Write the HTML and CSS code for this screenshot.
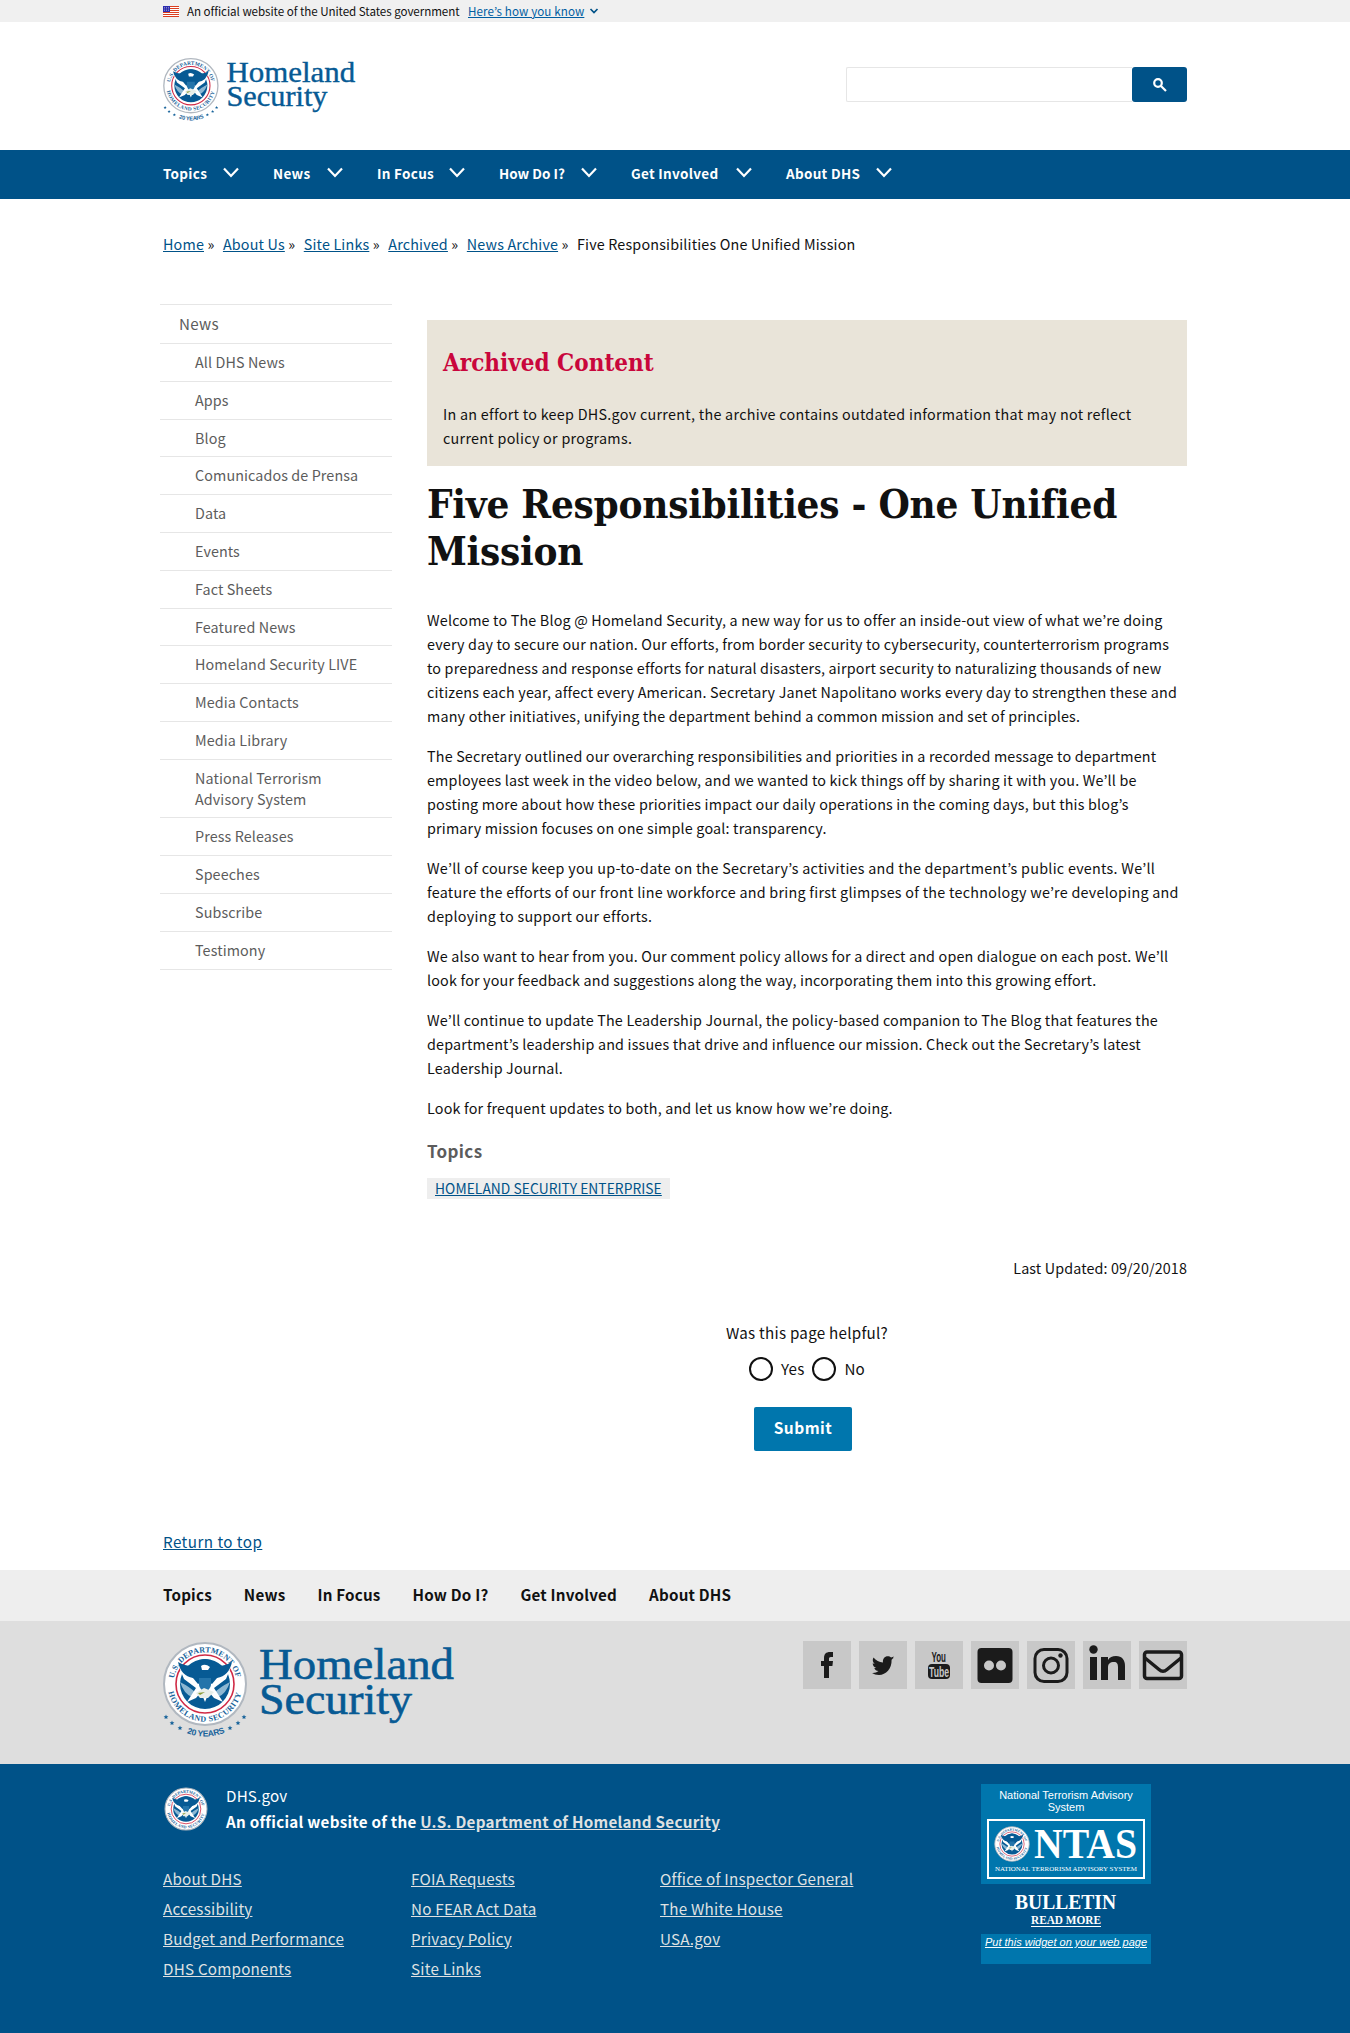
FILE: index.html
```html
<!DOCTYPE html>
<html lang="en">
<head>
<meta charset="utf-8">
<title>Five Responsibilities One Unified Mission | Homeland Security</title>
<link rel="stylesheet" href="styles.css">
</head>
<body>
<svg class="defs" width="0" height="0" aria-hidden="true">
  <defs>
    <path id="arc-top" d="M-31.200-4.500A31.500 31.500 0 0 1 31.200-4.500"/>
    <path id="arc-bottom" d="M-36.700 7A37.300 37.300 0 0 0 36.700 7"/>
    <path id="arc-years" d="M-38 36A52 52 0 0 0 38 36"/>
    <path id="star" d="M0-2.400L.7-.8 2.400-.7 1.100.4 1.500 2.100 0 1.200-1.500 2.100-1.100.4-2.400-.7-.7-.8z"/>
    <g id="seal">
      <circle r="41" fill="#fff" stroke="#b1b8c0" stroke-width="2"/>
      <g class="seal-text">
        <text><textPath href="#arc-top" textLength="87" startOffset="1">U.S. DEPARTMENT OF</textPath></text>
        <text><textPath href="#arc-bottom" textLength="100" startOffset="1">HOMELAND SECURITY</textPath></text>
      </g>
      <circle r="29" fill="#fff" stroke="#d02a45" stroke-width="1.6"/>
      <circle r="25" fill="#075a94"/>
      <path d="M-25-2Q-15 3-9 9L-13 13Q-21 10-25-2M25-2Q15 3 9 9L13 13Q21 10 25-2" fill="#8db7d2"/>
      <path d="M-28-22L-21-5-9 4-18 18-9 14-4 8 0 18 4 8 9 14 18 18 9 4 21-5 28-22 13-7 7-3 0-6-7-3-13-7z" fill="#fff"/>
      <path d="M-27-22Q-19-17-8-18Q-7-25 0-25Q7-25 8-18Q19-17 27-22Q24-8 12-6L7 0Q0-5-7 0L-12-6Q-24-8-27-22" fill="#075a94"/>
      <path d="M-4-18Q0-21 5-17L3-14-3-14z" fill="#fff"/>
      <path d="M-6-6H6V1Q5 6 0 8Q-5 6-6 1z" fill="#2474aa"/>
      <path d="M-9 9L-1 4 9 8 3 14-5 14z" fill="#e8eee9"/>
      <path d="M-7 9l7-1-5 3z" fill="#8b9b36"/>
    </g>
    <g id="brand">
      <use href="#seal" transform="translate(42 42)"/>
      <g fill="#16629a">
        <use href="#star" x="3" y="75"/><use href="#star" x="9" y="81"/><use href="#star" x="17" y="86"/>
        <use href="#star" x="67" y="86"/><use href="#star" x="75" y="81"/><use href="#star" x="81" y="75"/>
      </g>
      <g transform="translate(42 42)" class="years"><text><textPath href="#arc-years" textLength="39" startOffset="24">20 YEARS</textPath></text></g>
      <g class="wordmark">
        <text x="96" y="36.500" textLength="195" lengthAdjust="spacingAndGlyphs">Homeland</text>
        <text x="96" y="72" textLength="153" lengthAdjust="spacingAndGlyphs">Security</text>
      </g>
    </g>
    <path id="chev" d="M1 1.500L8 9l7-7.500" fill="none" stroke="#fff" stroke-width="2.200"/>
  </defs>
</svg>

<div class="banner"><div class="wrap">
  <svg width="16" height="11" viewBox="0 0 16 11"><path fill="#fff" d="M0 0h16v11H0z"/><path d="M0 .5h16M0 2.500h16M0 4.500h16M0 6.500h16M0 8.500h16M0 10.500h16" stroke="#db3e1f"/><path fill="#2c2cb0" d="M0 0h7v6H0z"/><path d="M1 1.500h5.500M1 3h5.500M1 4.500h5.500" stroke="#aac" stroke-width=".7" stroke-dasharray="1 1"/></svg>
  <span class="banner-text">An official website of the United States government</span>
  <a class="banner-link">Here’s how you know</a>
  <svg width="10" height="6" viewBox="0 0 10 6"><path d="M1.500 1L5 4.500 8.500 1" fill="none" stroke="#005288" stroke-width="1.700"/></svg>
</div></div>

<header class="header wrap">
  <svg class="logo" width="193" height="66" viewBox="0 0 292 100"><use href="#brand"/></svg>
  <form class="search">
    <span class="search-field"></span>
    <span class="search-button"><svg width="14" height="14" viewBox="0 0 14 14"><circle cx="5" cy="5" r="3.800"/><path d="M8 8l5 5"/></svg></span>
  </form>
</header>

<nav class="nav"><div class="wrap">
  <a class="n1">Topics<svg width="16" height="11"><use href="#chev"/></svg></a>
  <a class="n2">News<svg width="16" height="11"><use href="#chev"/></svg></a>
  <a class="n3">In Focus<svg width="16" height="11"><use href="#chev"/></svg></a>
  <a class="n4">How Do I?<svg width="16" height="11"><use href="#chev"/></svg></a>
  <a class="n5">Get Involved<svg width="16" height="11"><use href="#chev"/></svg></a>
  <a class="n6">About DHS<svg width="16" height="11"><use href="#chev"/></svg></a>
</div></nav>

<div class="crumbs wrap">
  <span><a>Home</a> »</span><span><a>About Us</a> »</span><span><a>Site Links</a> »</span><span><a>Archived</a> »</span><span><a>News Archive</a> »</span><span>Five Responsibilities One Unified Mission</span>
</div>

<div class="columns wrap">
  <ul class="side">
    <li class="side-top">News</li>
    <li>All DHS News</li><li>Apps</li><li>Blog</li><li>Comunicados de Prensa</li><li>Data</li><li>Events</li><li>Fact Sheets</li><li>Featured News</li><li>Homeland Security LIVE</li><li>Media Contacts</li><li>Media Library</li><li>National Terrorism<br>Advisory System</li><li>Press Releases</li><li>Speeches</li><li>Subscribe</li><li>Testimony</li>
  </ul>
  <main class="main">
    <section class="archived">
      <h2>Archived Content</h2>
      <p>In an effort to keep DHS.gov current, the archive contains outdated information that may not reflect<br>current policy or programs.</p>
    </section>
    <h1>Five Responsibilities - One Unified<br>Mission</h1>
    <div class="copy">
      <p>Welcome to The Blog @ Homeland Security, a new way for us to offer an inside-out view of what we’re doing<br>every day to secure our nation. Our efforts, from border security to cybersecurity, counterterrorism programs<br>to preparedness and response efforts for natural disasters, airport security to naturalizing thousands of new<br>citizens each year, affect every American. Secretary Janet Napolitano works every day to strengthen these and<br>many other initiatives, unifying the department behind a common mission and set of principles.</p>
      <p>The Secretary outlined our overarching responsibilities and priorities in a recorded message to department<br>employees last week in the video below, and we wanted to kick things off by sharing it with you. We’ll be<br>posting more about how these priorities impact our daily operations in the coming days, but this blog’s<br>primary mission focuses on one simple goal: transparency.</p>
      <p class="loose">We’ll of course keep you up-to-date on the Secretary’s activities and the department’s public events. We’ll<br>feature the efforts of our front line workforce and bring first glimpses of the technology we’re developing and<br>deploying to support our efforts.</p>
      <p>We also want to hear from you. Our comment policy allows for a direct and open dialogue on each post. We’ll<br>look for your feedback and suggestions along the way, incorporating them into this growing effort.</p>
      <p>We’ll continue to update The Leadership Journal, the policy-based companion to The Blog that features the<br>department’s leadership and issues that drive and influence our mission. Check out the Secretary’s latest<br>Leadership Journal.</p>
      <p>Look for frequent updates to both, and let us know how we’re doing.</p>
    </div>
    <h3>Topics</h3>
    <a class="tag">HOMELAND SECURITY ENTERPRISE</a>
    <p class="updated">Last Updated: 09/20/2018</p>
    <form class="helpful">
      <p>Was this page helpful?</p>
      <div class="choices"><i></i><span>Yes</span><i></i><span>No</span></div>
      <span class="submit">Submit</span>
    </form>
  </main>
</div>

<div class="return wrap"><a>Return to top</a></div>

<footer>
  <div class="foot-nav"><div class="wrap"><a>Topics</a><a>News</a><a>In Focus</a><a>How Do I?</a><a>Get Involved</a><a>About DHS</a></div></div>
  <div class="foot-brand"><div class="wrap">
    <svg class="foot-logo" width="292" height="100" viewBox="0 0 292 100"><use href="#brand"/></svg>
    <div class="social">
      <svg viewBox="0 0 48 48"><path d="M21 37V25h-3v-5h3v-3c0-4 2-6 6-6h3v5h-2c-2 0-2 1-2 2v2h4l-.6 5H26v12z"/></svg>
      <svg viewBox="0 0 48 48"><path d="M35 16.500l-2.400 2.300c.3 9-5.600 15.200-12.600 15.200-3 0-5-.8-7-2 2.800.2 4.800-.5 6.500-1.900-2.200-.2-3.500-1.300-4.200-3.100h2c-2.300-.8-3.600-2.500-3.600-4.700l2 .6c-2-1.600-2.500-4-1.200-6.300 2.500 3 5.600 4.700 9.500 4.800-.6-3.500 1.700-6.200 4.800-6.200 1.300 0 2.400.5 3.300 1.400l2.900-1.100-1.500 2z"/></svg>
      <svg viewBox="0 0 48 48"><rect x="13" y="23" width="22" height="15" rx="4"/><text class="yt" x="16.500" y="20.500" textLength="14.500" lengthAdjust="spacingAndGlyphs">You</text><text class="yt tube" x="14" y="35.500" textLength="20" lengthAdjust="spacingAndGlyphs">Tube</text></svg>
      <svg viewBox="0 0 48 48"><rect x="6.500" y="7" width="35" height="35" rx="4"/><circle cx="18" cy="24.500" r="5" fill="#c8c8c8"/><circle cx="30" cy="24.500" r="5" fill="#c8c8c8"/></svg>
      <svg viewBox="0 0 48 48"><g fill="none" stroke="#1b1b1b" stroke-width="3"><rect x="8" y="8.500" width="32" height="32" rx="9"/><circle cx="24" cy="24.500" r="7.500"/></g><circle cx="33.500" cy="14.500" r="2.200"/></svg>
      <svg viewBox="0 0 48 48"><circle cx="10.500" cy="8.500" r="4.200"/><path d="M7 16h7v23H7zM18 16h7v3c2-3 4-4 8-4 6 0 9 4 9 10v14h-7V26c0-3-1-5-4-5-4 0-6 2-6 5v13h-7z"/></svg>
      <svg viewBox="0 0 48 48"><g fill="none" stroke="#1b1b1b" stroke-width="3.500"><rect x="5.500" y="11" width="37" height="26.500" rx="2.500"/><path d="M6 17l14 11.500q4 3.500 8 0L42 17"/></g></svg>
    </div>
  </div></div>
  <div class="foot-id"><div class="wrap">
    <div class="foot-info">
      <div class="ident">
        <svg width="44" height="44" viewBox="-43 -43 86 86"><use href="#seal"/></svg>
        <div><p>DHS.gov</p><p class="ident-main">An official website of the <a>U.S. Department of Homeland Security</a></p></div>
      </div>
      <div class="links">
        <a>About DHS</a><a>FOIA Requests</a><a>Office of Inspector General</a>
        <a>Accessibility</a><a>No FEAR Act Data</a><a>The White House</a>
        <a>Budget and Performance</a><a>Privacy Policy</a><a>USA.gov</a>
        <a>DHS Components</a><a>Site Links</a>
      </div>
    </div>
    <aside class="ntas">
      <div class="ntas-top">National Terrorism Advisory<br>System
        <svg width="158" height="60" viewBox="0 0 158 60"><rect x="1" y="1" width="156" height="58" fill="none" stroke="#fff" stroke-width="2"/><use href="#seal" transform="translate(25 25) scale(.42)"/>
        <text class="big" x="47" y="39" textLength="103" lengthAdjust="spacingAndGlyphs">NTAS</text><text class="small" x="8" y="52" textLength="142" lengthAdjust="spacingAndGlyphs">NATIONAL TERRORISM ADVISORY SYSTEM</text></svg>
      </div>
      <div class="ntas-mid"><svg width="170" height="50" viewBox="0 0 170 50"><text class="bulletin" x="34" y="25" textLength="101" lengthAdjust="spacingAndGlyphs">BULLETIN</text><text class="more" x="50" y="40" textLength="70" lengthAdjust="spacingAndGlyphs">READ MORE</text><path d="M50 42.500h70" stroke="#fff"/></svg></div>
      <div class="ntas-foot"><a>Put this widget on your web page</a></div>
    </aside>
  </div></div>
</footer>
</body>
</html>
```
FILE: styles.css
```css
* { box-sizing: border-box; }
body { margin: 0; background: #fff; color: #111; font: 14.33px/24px "Noto Sans CJK KR", "Noto Sans", sans-serif; letter-spacing: .18px; }
p, h1, h2, h3, ul { margin: 0; padding: 0; }
svg { display: block; flex: none; letter-spacing: 0; }
.defs { position: absolute; }
a, p, span, li { white-space: nowrap; }
.wrap { width: 1024px; margin: 0 auto; display: flex; }

.seal-text { font: bold 8px "Liberation Serif", serif; fill: #16629a; }
.years { font: bold 8.5px "Liberation Sans", sans-serif; fill: #16629a; }
.wordmark { font: 45px "Liberation Serif", serif; fill: #075a94; stroke: #075a94; stroke-width: .6px; }

.banner { height: 22px; background: #f0f0f0; }
.banner .wrap { height: 22px; align-items: center; }
.banner-text { font-size: 11.6px; letter-spacing: -.05px; margin-left: 8px; width: 281px; flex: none; }
.banner-link { font-size: 11.6px; letter-spacing: .1px; color: #005ea2; text-decoration: underline; margin-right: 5px; }

.header { height: 128px; justify-content: space-between; }
.logo { margin-top: 36px; }
.search { display: flex; height: 35px; margin-top: 45px; }
.search-field { width: 286px; border: 1px solid #e6e6e6; border-radius: 2px 0 0 2px; border-right: 0; }
.search-button { width: 55px; border-radius: 3px; background: #005288; display: flex; align-items: center; justify-content: center; }
.search-button svg { fill: none; stroke: #fff; stroke-width: 2.2; }

.nav { height: 49px; background: #005288; }
.nav a { display: flex; align-items: center; justify-content: space-between; height: 45px; color: #fff; font-weight: 700; font-size: 13.5px; letter-spacing: .3px; }
.n1 { width: 76px; margin-right: 34px; }
.n2 { width: 70px; margin-right: 34px; }
.n3 { width: 88px; margin-right: 34px; }
.nav .n4 { width: 98px; margin-right: 34px; letter-spacing: 0; }
.n5 { width: 121px; margin-right: 34px; }
.n6 { width: 106px; }

.crumbs { height: 105px; padding-top: 33px; gap: 8.5px; letter-spacing: .17px; }
.crumbs a { color: #005288; text-decoration: underline; }

.columns { height: 1206px; }
.side { list-style: none; width: 232px; margin: 0 35px 0 -3px; color: #5c5c5c; line-height: 20.8px; letter-spacing: .1px; flex: none; }
.side li { border-top: 1px solid #e6e6e6; padding: 8px 0 8px 35px; }
.side .side-top { font-size: 15.2px; line-height: 20.1px; padding: 8px 0 10px 19px; letter-spacing: .3px; }
.side li:last-child { border-bottom: 1px solid #e6e6e6; }

.main { width: 760px; padding-top: 16px; }
.archived { height: 146px; background: #e9e4d9; padding: 26px 16px 0; letter-spacing: .28px; }
.archived h2 { font: bold 24px/34px "DejaVu Serif Condensed", "DejaVu Serif", serif; color: #c9063c; letter-spacing: 0; margin-bottom: 22px; white-space: nowrap; }
h1 { font: bold 40px/47px "DejaVu Serif Condensed", "DejaVu Serif", serif; color: #111; letter-spacing: -.25px; padding-top: 14px; margin-bottom: 34px; white-space: nowrap; }
.copy p { margin-bottom: 16px; }
.copy .loose { letter-spacing: .27px; }
h3 { font-size: 17px; line-height: 24px; color: #5c5c5c; margin-top: 19px; letter-spacing: .35px; }
.tag { display: block; width: 243px; height: 21px; margin-top: 15px; padding-left: 8px; background: #eee; color: #005288; font-size: 13.8px; letter-spacing: .05px; line-height: 20px; text-decoration: underline; }
.updated { text-align: right; margin-top: 57px; letter-spacing: .12px; }
.helpful { display: flex; flex-direction: column; align-items: center; padding-top: 40px; font-size: 15.2px; }
.helpful p { letter-spacing: .25px; }
.choices { display: flex; align-items: center; gap: 8px; margin-top: 13px; line-height: 22px; height: 24px; }
.choices i { width: 24px; height: 24px; border: 2px solid #111; border-radius: 50%; }
.choices span { margin-top: -2px; }
.submit { width: 98px; height: 44px; margin: 26px 8px 0 0; border-radius: 2px; background: #0076ad; color: #fff; font-weight: 700; font-size: 15.5px; letter-spacing: .5px; line-height: 41px; text-align: center; }

.return { height: 60px; padding-top: 18px; font-size: 15.2px; line-height: 26px; letter-spacing: .45px; }
.return a { color: #005288; text-decoration: underline; }

.foot-nav { height: 51px; background: #eee; }
.foot-nav .wrap { gap: 32px; line-height: 49px; font-size: 15.2px; font-weight: 700; letter-spacing: .2px; }
.foot-brand { height: 143px; background: #dedede; }
.foot-brand .wrap { justify-content: space-between; padding-top: 20px; }
.foot-logo { margin-top: 1px; }
.social { display: flex; gap: 8px; }
.social svg { width: 48px; height: 48px; background: #c8c8c8; fill: #1b1b1b; }
.yt { font: bold 14.5px "Liberation Sans", sans-serif; }
.tube { fill: #c8c8c8; }

.foot-id { height: 269px; background: #005288; color: #fff; }
.foot-id .wrap { padding-top: 20px; }
.foot-info { width: 818px; margin-top: -2px; }
.ident { display: flex; gap: 18px; height: 81px; font-size: 15.2px; line-height: 26px; align-items: flex-start; }
.ident > svg { margin-top: 5px; margin-left: 1px; }
.ident-main { font-weight: 700; letter-spacing: .27px; }
.ident a, .links a { color: #dfe1e2; text-decoration: underline; }
.links { display: grid; grid-template-columns: 248px 249px 1fr; grid-auto-rows: 30px; font-size: 15.2px; line-height: 30px; letter-spacing: .23px; }
.ntas { width: 170px; font: 11px/12px "Liberation Sans", sans-serif; letter-spacing: 0; text-align: center; }
.ntas-top { height: 100px; padding: 5px 6px 0; background: #0076ad; }
.ntas-top svg { margin-top: 6px; }
.ntas-mid { height: 50px; }
.ntas-foot { height: 30px; padding-top: 2px; background: #0076ad; font-style: italic; }
.ntas-foot a { text-decoration: underline; }
.ntas text { font-family: "Liberation Serif", serif; text-anchor: start; }
.ntas .big { font-size: 42px; font-weight: bold; fill: #fff; }
.ntas .small { font-size: 6.8px; fill: #fff; }
.ntas .bulletin { font-size: 21px; font-weight: bold; fill: #fff; }
.ntas .more { font-size: 13px; font-weight: bold; fill: #fff; }
```
